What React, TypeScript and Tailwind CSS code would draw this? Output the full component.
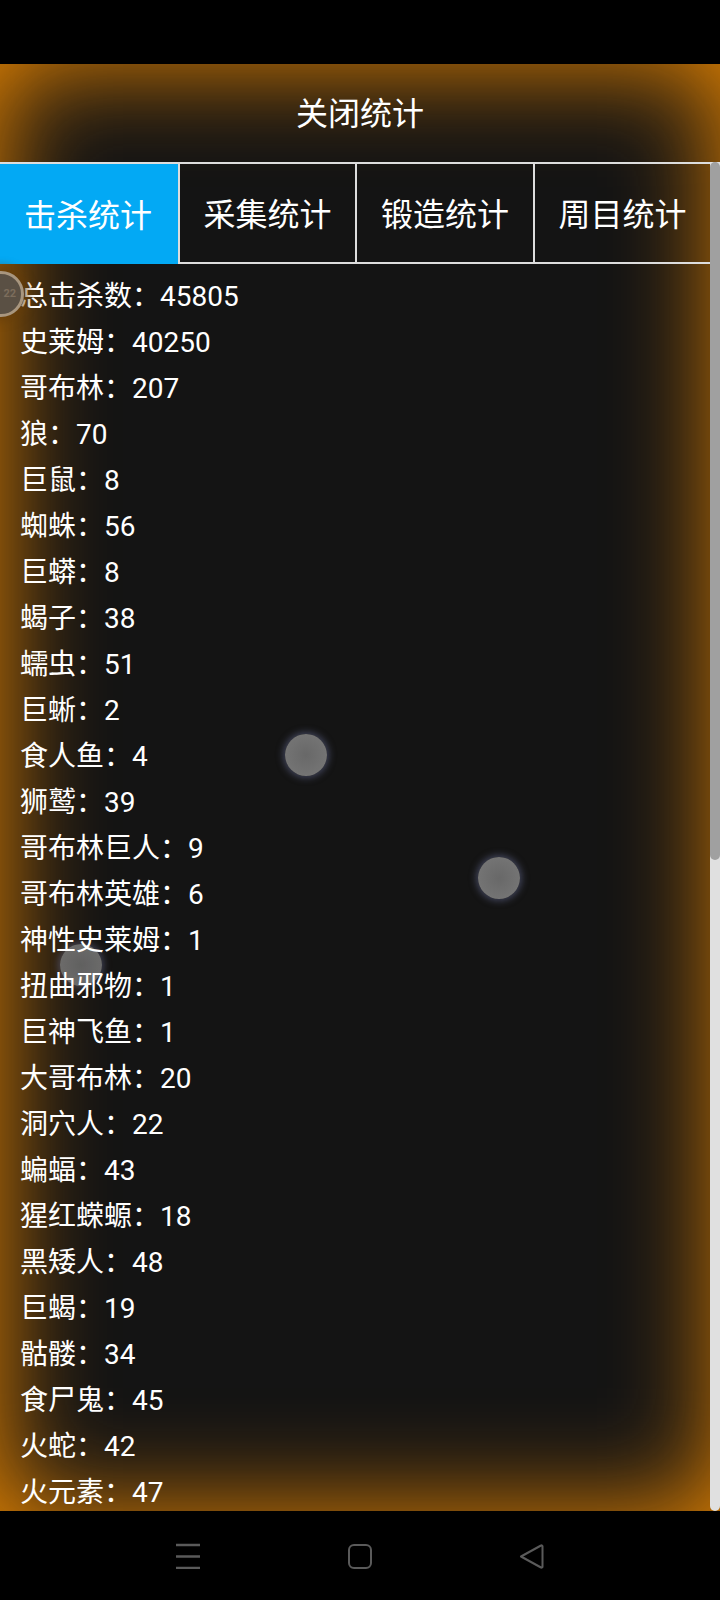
const tabs = ["击杀统计", "采集统计", "锻造统计", "周目统计"];
const tabWidths = ["w-[178px]", "w-[177px]", "w-[178px]", "flex-1"];

const kills: [string, number][] = [
  ["总击杀数", 45805], ["史莱姆", 40250], ["哥布林", 207], ["狼", 70], ["巨鼠", 8],
  ["蜘蛛", 56], ["巨蟒", 8], ["蝎子", 38], ["蠕虫", 51], ["巨蜥", 2],
  ["食人鱼", 4], ["狮鹫", 39], ["哥布林巨人", 9], ["哥布林英雄", 6], ["神性史莱姆", 1],
  ["扭曲邪物", 1], ["巨神飞鱼", 1], ["大哥布林", 20], ["洞穴人", 22], ["蝙蝠", 43],
  ["猩红蝾螈", 18], ["黑矮人", 48], ["巨蝎", 19], ["骷髅", 34], ["食尸鬼", 45],
  ["火蛇", 42], ["火元素", 47],
];

function Orb({ className }: { className: string }) {
  return (
    <div
      className={`absolute h-[42px] w-[42px] rounded-full bg-[radial-gradient(circle,#686868_0%,#737373_65%,#808080_100%)] shadow-[0_0_7px_2px_rgba(110,115,160,0.5)] ${className}`}
    />
  );
}

export default function App() {
  return (
    <div className="flex h-[1600px] w-[720px] flex-col overflow-hidden bg-black font-['Roboto','Noto_Sans_CJK_SC',sans-serif] text-white">
      <div className="h-16 shrink-0" />

      <main className="relative flex min-h-0 flex-1 flex-col overflow-hidden bg-[#141414]">
        {/* Orange glow around the edge of the panel, behind the content */}
        <div className="pointer-events-none absolute inset-0 shadow-[inset_0_0_102px_0_#f08a00]" />

        <header className="relative flex h-[98px] shrink-0 items-center justify-center pt-[2px] text-[32px] leading-none text-white">
          关闭统计
        </header>

        <nav className="relative mr-[10px] flex h-[102px] shrink-0 border-y-2 border-[#dddddd]">
          {tabs.map((tab, i) => (
            <div
              key={tab}
              className={`${tabWidths[i]} flex items-center justify-center pt-[3px] text-[32px] text-white ${
                i === 0 ? "-mb-[2px] bg-[#03a9f4] pr-[2px]" : "border-l-2 border-[#dddddd]"
              }`}
            >
              {tab}
            </div>
          ))}
        </nav>

        <section className="relative min-h-0 flex-1 overflow-hidden pt-[10px] pl-5">
          <Orb className="top-[680px] left-[60px] opacity-90" />
          <Orb className="top-[470px] left-[285px]" />
          <Orb className="top-[593px] left-[478px]" />
          {kills.map(([name, count]) => (
            <div key={name} className="relative h-[46px] text-[28px] leading-[46px] whitespace-nowrap text-white">
              {name}：{count}
            </div>
          ))}
        </section>

        {/* Floating badge at the left edge */}
        <div className="absolute top-[207px] -left-[22px] flex h-[46px] w-[46px] items-center justify-end rounded-full border-[3px] border-[#a8967f] bg-[#5a5044] pr-[5px] text-[11px] font-bold text-[#7c6d5c] shadow-[0_0_8px_5px_rgba(100,60,10,0.6)]">
          22
        </div>

        {/* Scrollbar */}
        <div className="absolute top-[98px] right-0 bottom-0 w-[10px] rounded-b-[5px] bg-[#e0e0e0]">
          <div className="h-[698px] rounded-[5px] bg-[#a0a0a0]" />
        </div>
      </main>

      <footer className="flex h-[89px] shrink-0 items-start justify-center gap-[146px] pt-[32px] text-[#5a5a5a]">
        <svg width="26" height="26" viewBox="0 0 26 26" fill="none" stroke="currentColor" strokeWidth="2.5">
          <path d="M1 2h24M1 13.5h24M1 25h24" />
        </svg>
        <svg width="26" height="26" viewBox="0 0 26 26" fill="none" stroke="currentColor" strokeWidth="2">
          <rect x="2" y="2" width="22" height="23" rx="5" />
        </svg>
        <svg width="26" height="26" viewBox="0 0 26 26" fill="none" stroke="currentColor" strokeWidth="2" strokeLinejoin="round">
          <path d="M2 13.5 22 2.5a1 1 0 0 1 1.5 1v20a1 1 0 0 1-1.5 1z" />
        </svg>
      </footer>
    </div>
  );
}
